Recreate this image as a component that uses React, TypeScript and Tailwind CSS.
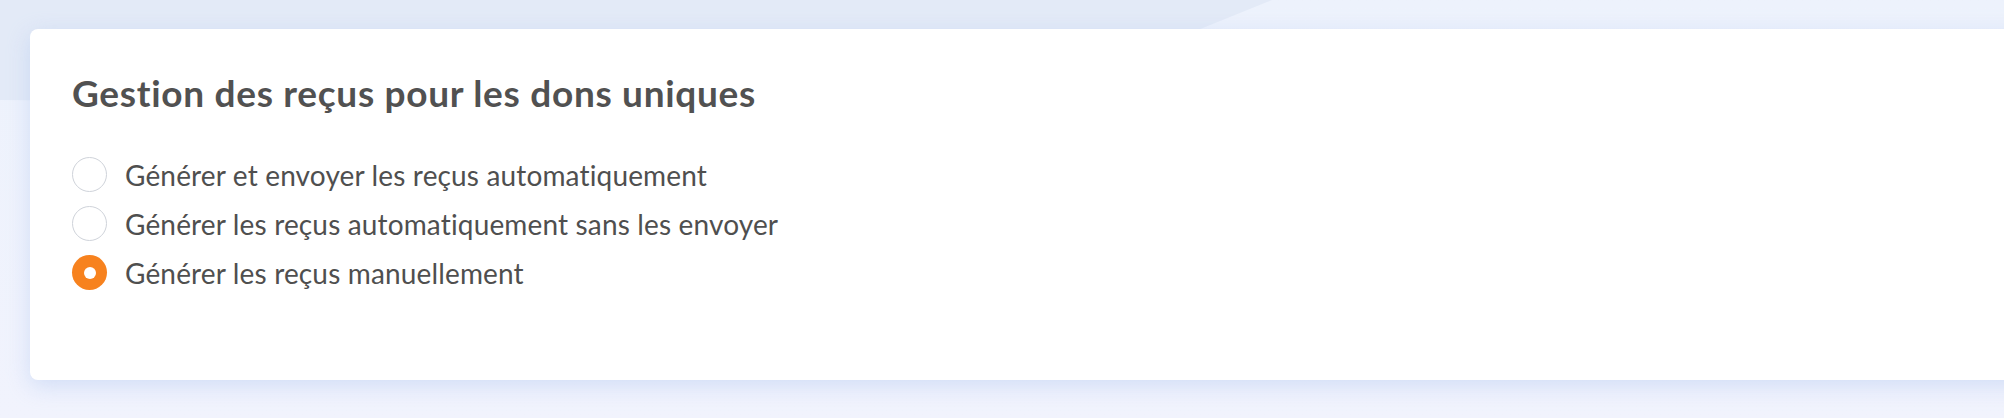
import React, { useState } from "react";

const options = [
  "Générer et envoyer les reçus automatiquement",
  "Générer les reçus automatiquement sans les envoyer",
  "Générer les reçus manuellement",
];

function Radio({ checked }: { checked: boolean }) {
  return checked ? (
    <span className="flex h-[35px] w-[35px] shrink-0 items-center justify-center rounded-full bg-[#f7821e]">
      <span className="h-[12px] w-[12px] rounded-full bg-white" />
    </span>
  ) : (
    <span className="h-[35px] w-[35px] shrink-0 rounded-full border border-[#cfd3da] bg-white" />
  );
}

export default function App() {
  const [selected, setSelected] = useState(2);

  return (
    <div
      className="relative h-[418px] w-[2004px] overflow-hidden bg-gradient-to-b from-[#edf2fc] to-[#f1f3fd]"
      style={{ fontFamily: "Lato, 'Noto Sans', sans-serif" }}
    >
      {/* soft decorative backdrop shape */}
      <svg
        className="pointer-events-none absolute left-0 top-0"
        width="2004"
        height="120"
        viewBox="0 0 2004 120"
      >
        <polygon points="0,0 1272,0 1000,110 0,100" fill="#e3eaf7" />
      </svg>

      <div className="relative pl-[30px] pt-[29px]">
        <div className="h-[351px] w-[2100px] rounded-[8px] bg-white pl-[42px] pt-[45px] shadow-[0_6px_22px_rgba(170,195,240,0.45)]">
          <h2 className="text-[37px] font-bold leading-[37px] tracking-[0.7px] text-[#515151]">
            Gestion des reçus pour les dons uniques
          </h2>
          <div className="mt-[39px] flex flex-col">
            {options.map((label, i) => (
              <label
                key={label}
                className="flex h-[49px] cursor-pointer items-center gap-[18px]"
                onClick={() => setSelected(i)}
              >
                <Radio checked={selected === i} />
                <span className="text-[28px] leading-[30px] tracking-[0.15px] text-[#4f4f4f]">
                  {label}
                </span>
              </label>
            ))}
          </div>
        </div>
      </div>
    </div>
  );
}
